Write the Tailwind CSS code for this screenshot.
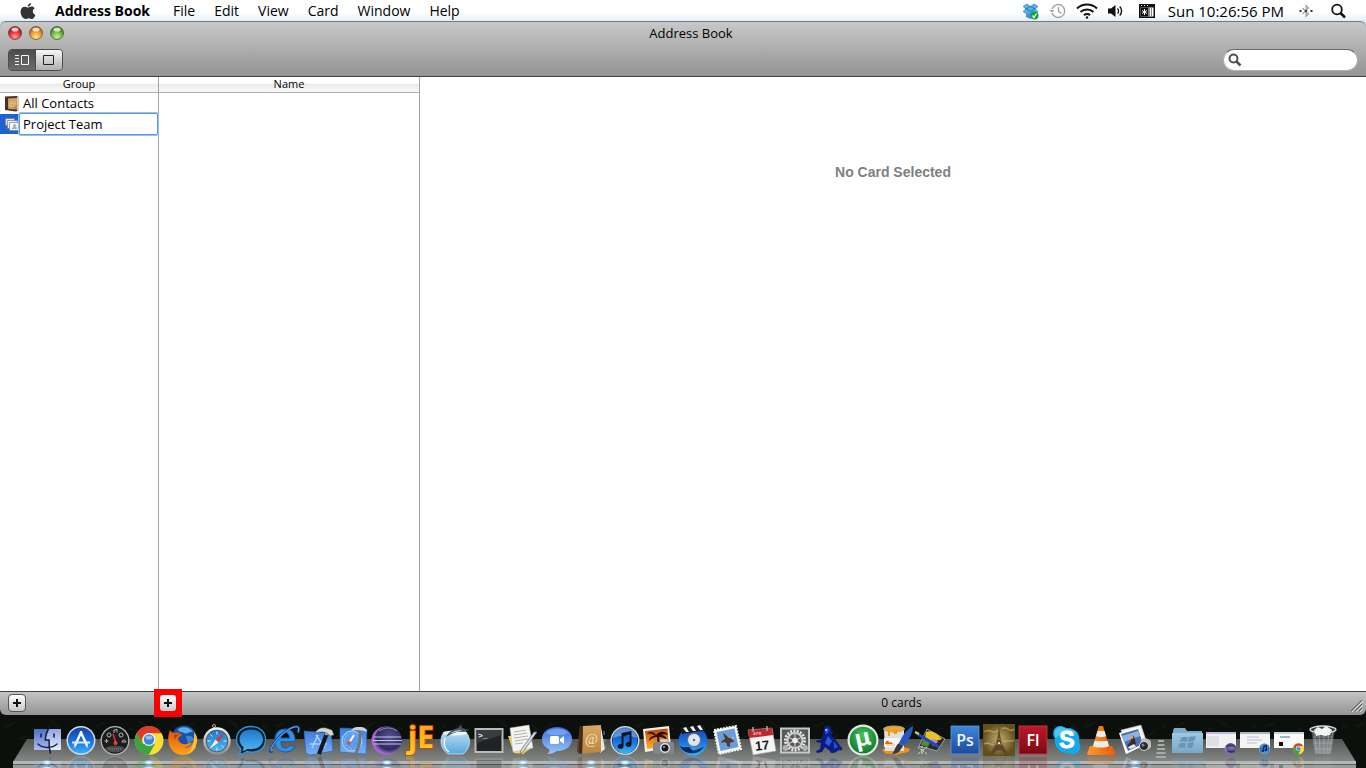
<!DOCTYPE html>
<html lang="en">
<head>
    <meta charset="UTF-8">
    <meta name="viewport" content="width=device-width, initial-scale=1.0">
    <title>Address Book</title>
    <script src="https://cdn.jsdelivr.net/npm/@tailwindcss/browser@4"></script>
</head>
<body class="h-screen flex flex-col overflow-hidden bg-[#0b100c] text-black font-['Open_Sans','Noto_Sans',sans-serif]">

    <!-- Shared gradients; this svg has to stay rendered for the fills to work -->
    <svg class="absolute w-0 h-0" aria-hidden="true">
        <defs>
            <linearGradient id="gFinderL" x2="0" y2="1"><stop offset="0" stop-color="#4f6fc4"/><stop offset="1" stop-color="#a9bdf0"/></linearGradient>
            <linearGradient id="gFinderR" x2="0" y2="1"><stop offset="0" stop-color="#8fa6e2"/><stop offset="1" stop-color="#e4ecfc"/></linearGradient>
            <linearGradient id="gBlue" x2="0" y2="1"><stop offset="0" stop-color="#1540a0"/><stop offset=".5" stop-color="#1a6fe0"/><stop offset="1" stop-color="#35b4fa"/></linearGradient>
            <linearGradient id="gSilver" x2="0" y2="1"><stop offset="0" stop-color="#f4f4f4"/><stop offset="1" stop-color="#8d8d8d"/></linearGradient>
            <linearGradient id="gSky" x2="0" y2="1"><stop offset="0" stop-color="#2176c8"/><stop offset="1" stop-color="#4cb8f6"/></linearGradient>
            <linearGradient id="gPrint" x2="0" y2="1"><stop offset="0" stop-color="#3c7cdc"/><stop offset="1" stop-color="#7ab2f8"/></linearGradient>
            <linearGradient id="gChat" x2="0" y2="1"><stop offset="0" stop-color="#3568d8"/><stop offset="1" stop-color="#9cc8fc"/></linearGradient>
            <linearGradient id="gTan" x2="0" y2="1"><stop offset="0" stop-color="#d8a860"/><stop offset="1" stop-color="#b98440"/></linearGradient>
            <linearGradient id="gPs" x2="0" y2="1"><stop offset="0" stop-color="#3f86dc"/><stop offset="1" stop-color="#1c4a98"/></linearGradient>
            <linearGradient id="gFl" x2="0" y2="1"><stop offset="0" stop-color="#c01828"/><stop offset="1" stop-color="#780914"/></linearGradient>
            <linearGradient id="gSunset" x2="0" y2="1"><stop offset="0" stop-color="#c04408"/><stop offset="1" stop-color="#ffb428"/></linearGradient>
            <linearGradient id="gCone" x2="1" y2="0"><stop offset="0" stop-color="#ff9a28"/><stop offset="1" stop-color="#e85c00"/></linearGradient>
            <linearGradient id="gFolder" x2="0" y2="1"><stop offset="0" stop-color="#9fc8e0"/><stop offset="1" stop-color="#78a8c8"/></linearGradient>
            <linearGradient id="gBowl" x2="0" y2="1"><stop offset="0" stop-color="#b8dcf2"/><stop offset="1" stop-color="#58a8dc"/></linearGradient>
            <linearGradient id="gYellow" x2="0" y2="1"><stop offset="0" stop-color="#ff9a10"/><stop offset="1" stop-color="#ffd21c"/></linearGradient>
            <linearGradient id="gFire" x2="0" y2="1"><stop offset="0" stop-color="#e05008"/><stop offset="1" stop-color="#fca41c"/></linearGradient>
            <radialGradient id="gEclipse" cx=".55" cy=".4" r=".6"><stop offset="0" stop-color="#5c5690"/><stop offset=".75" stop-color="#2e2a60"/><stop offset="1" stop-color="#8a68b8"/></radialGradient>
            <radialGradient id="gGreen" cx=".5" cy=".35" r=".7"><stop offset="0" stop-color="#48c060"/><stop offset="1" stop-color="#087828"/></radialGradient>
            <radialGradient id="gParis"><stop offset="0" stop-color="#c8b070"/><stop offset="1" stop-color="#62501c"/></radialGradient>
            <radialGradient id="gGlow"><stop offset="0" stop-color="#fff"/><stop offset=".4" stop-color="#c0e6ff"/><stop offset="1" stop-color="#68b0f0" stop-opacity="0"/></radialGradient>
            <radialGradient id="gRed" cx=".5" cy=".8" r=".75"><stop offset="0" stop-color="#ff9c94"/><stop offset=".55" stop-color="#e8303c"/><stop offset="1" stop-color="#8c1018"/></radialGradient>
            <radialGradient id="gAmber" cx=".5" cy=".8" r=".75"><stop offset="0" stop-color="#ffe888"/><stop offset=".55" stop-color="#f09a30"/><stop offset="1" stop-color="#98500c"/></radialGradient>
            <radialGradient id="gLime" cx=".5" cy=".8" r=".75"><stop offset="0" stop-color="#c8f490"/><stop offset=".55" stop-color="#6cb840"/><stop offset="1" stop-color="#2c6c18"/></radialGradient>
        </defs>
    </svg>

    <!-- Icon shapes, each drawn on a 34x32 tile -->
    <svg class="hidden" aria-hidden="true">
        <symbol id="finder" viewBox="0 0 34 32">
            <path d="M4 5h14.500c-2 4-3 7-3.200 11h3.500l.5 10H4z" fill="url(#gFinderL)"/>
            <path d="M18.500 5H31v21H19l-.5-10h-3c.2-4 1-7 3-11z" fill="url(#gFinderR)"/>
            <path d="M20 2c-3 5-4.500 9-4.700 14h3.700c0 4 .3 9 1.300 13M8 20c5 4.500 14 4.500 19 0M11 10v3M24 10v3" fill="none" stroke="#151b38" stroke-width="1.500" stroke-linecap="round"/>
        </symbol>
        <symbol id="appstore" viewBox="0 0 34 32">
            <circle cx="17" cy="16.500" r="14.500" fill="#d4dae2"/><circle cx="17" cy="16.500" r="13" fill="url(#gBlue)"/>
            <path d="M17.500 7.500 11 21.500M16.500 7.500 23 21.500" stroke="#f4faff" stroke-width="2.500"/><path d="M8 18.500h18" stroke="#dcecff" stroke-width="2"/>
            <path d="M10.800 21l-.8 3 2.500-2.200zM23.200 21l.8 3-2.500-2.200z" fill="#fff"/>
        </symbol>
        <symbol id="dashboard" viewBox="0 0 34 32">
            <circle cx="17" cy="16.500" r="14.500" fill="#b8b8b8"/><circle cx="17" cy="16.500" r="13.200" fill="#1c1c1e"/>
            <g fill="none" stroke="#b4b4b4"><circle cx="11" cy="11" r="2"/><circle cx="23" cy="11" r="2"/><path d="M6.500 17h4M8.500 15v4M24 18c0-2.500 4-2.500 4 0zM16 9V6l3-.5v3"/></g>
            <path d="M7 24c5-3 15-3 20 0-5 6-15 6-20 0z" fill="#4c4c50"/><path d="M10 25h14" stroke="#888" stroke-dasharray="1 1"/>
            <path d="M15 10l3 9" stroke="#e83030" stroke-width="1.500"/><circle cx="17.500" cy="19" r="2" fill="#f04038"/>
        </symbol>
        <symbol id="chrome" viewBox="0 0 34 32">
            <circle cx="17" cy="16.500" r="14.300" fill="#e8c820"/>
            <path d="M4.600 9.300A14.300 14.300 0 0 0 17 30.800L23 20 11 20z" fill="#3ca440"/>
            <path d="M29.400 9.300A14.300 14.300 0 0 1 17 30.800L23 20 20 9.300z" fill="#fadc38"/>
            <path d="M4.600 9.300A14.300 14.300 0 0 1 29.400 9.300H17a7 7 0 0 0-6.500 10z" fill="#dc3c30"/>
            <circle cx="17" cy="15.500" r="6.500" fill="#f4f4f0"/><circle cx="17" cy="15.500" r="5.200" fill="#3c84d8"/><ellipse cx="17" cy="13.500" rx="3.500" ry="2" fill="#8cc0f4"/>
        </symbol>
        <symbol id="firefox" viewBox="0 0 34 32">
            <circle cx="18" cy="14" r="12.500" fill="#1c50a8"/><path d="M12 5c5-3 12-2 15 3-4-1-5 3-9 1s-5 0-6-4z" fill="#58b0e8"/><path d="M20 12c4-1 7 0 8 4l-6 4z" fill="#3888d0"/>
            <path d="M4 6c1 2 3 3 5 3 3-1 5 0 7 2-1 1-4 2-4 4 1 3 3 5 6 5 3 1 5-2 8-1-2 4-6 4-8 4 6 2 10-3 10-12 5 9 1 20-11 20C5 31-1 18 4 6z" fill="url(#gFire)"/>
            <path d="M28 8c4 5 4 9 2 13 0 4-5 8-9 9 6-6 8-14 7-22z" fill="#fcc030"/>
            <path d="M8 11c2-1 4 0 5 1-3 0-4 2-3 4-2-1-2-3-2-5z" fill="#b83c08"/>
        </symbol>
        <symbol id="safari" viewBox="0 0 34 32">
            <circle cx="14" cy="2" r="1.500" fill="none" stroke="#aaa"/><circle cx="17" cy="17" r="13.700" fill="url(#gSilver)"/><circle cx="17" cy="17" r="11.300" fill="#4a545c"/><circle cx="17" cy="17" r="10.500" fill="url(#gSky)"/>
            <path d="M17 7.500v3M17 23.500v3M7.500 17h3M23.500 17h3M10.500 10.500l2 2M21.500 21.500l2 2" stroke="#e0f0fc"/>
            <path d="M24.500 9 18.500 18.500 15.500 15.500z" fill="#e03828"/><path d="M9.500 25 15.500 15.500 18.500 18.500z" fill="#f4f8fc"/>
        </symbol>
        <symbol id="bubble" viewBox="0 0 34 32">
            <path d="M17 2.500C8 2.500 2.500 8 2.500 15.500c0 4 2 7 4.500 9.500 0 2-1 4-2 5 4 0 6-1.500 7.500-2.500C25 30 31.500 24 31.500 15.500 31.500 8 26 2.500 17 2.500z" fill="#0c1c2c" stroke="#2898e4" stroke-width="1.300"/>
            <path d="M17 5.500C10 5.500 5.500 9.500 5.500 15.500c0 3.500 1.700 5.500 4 7.500 0 1.500 0 2.500-1 4 2-.2 3.500-1 5-2.200C22 26.500 29 22 29 15.500c0-6-5-10-12-10z" fill="url(#gSky)"/>
        </symbol>
        <symbol id="explorer" viewBox="0 0 34 32">
            <text x="17" y="28" text-anchor="middle" font-family="Liberation Sans" font-size="42" font-weight="bold" fill="#3490e0" stroke="#1858a8" stroke-width=".8">e</text>
            <path d="M5 27C-3 31 8 13 21 5c9-5 12-2 9 4" fill="none" stroke="#123c80" stroke-width="2.500"/>
            <path d="M5 26.500C-2 29 9 13 21 5.300c8-4.800 11-3 9 3" fill="none" stroke="#4ca4ec" stroke-width="1.300"/>
        </symbol>
        <symbol id="xcode" viewBox="0 0 34 32">
            <path d="M2 7l27 2 2 18-23 4-4-2z" fill="url(#gPrint)" stroke="#2c64b8" stroke-width=".6"/>
            <path d="M16 11l-6 13M14 11l9 13M8 20h17" stroke="#a8d0fc" stroke-width="1.500"/>
            <path d="M25 9 17 30" stroke="#15171a" stroke-width="4"/><path d="M26 5l-2 6" stroke="#b0b4b8" stroke-width="3"/><path d="M13 9c2-4 6-6 11-5l6 2 2 5-4 1-3-3-4-1c-3 0-5 0-8 1z" fill="#d4d8dc" stroke="#444" stroke-width=".5"/>
        </symbol>
        <symbol id="dashcode" viewBox="0 0 34 32">
            <path d="M4 4l27 1-1 25-26-2z" fill="url(#gPrint)" stroke="#2c64b8" stroke-width=".6"/>
            <circle cx="16" cy="17" r="10" fill="#5a9cf0" stroke="#b4d8fc"/><circle cx="16" cy="17" r="7.500" fill="none" stroke="#b4d8fc" stroke-dasharray="1 2"/><path d="M18 11l-5 8" stroke="#f4f8fc" stroke-width="2"/><circle cx="13" cy="19" r="2" fill="#dc5040"/>
            <path d="M24 5c0 9 1 15-5 26" fill="none" stroke="#70767e" stroke-width="3"/><path d="M15 7c2-4 5-4 9-4 4 0 6 1 7 5-5-2-11-3-16-1z" fill="#d0d4d8"/>
        </symbol>
        <symbol id="eclipse" viewBox="0 0 34 32">
            <ellipse cx="16" cy="16.500" rx="14.500" ry="14" fill="#b060d8"/><ellipse cx="18" cy="16" rx="14" ry="13.500" fill="url(#gEclipse)"/>
            <path d="M4 13h27M3 16.500h29M4 20h27" stroke="#c8c4e4" stroke-width="1.100"/><path d="M9 7c5-4 13-4 18 0" stroke="#8c88b8" fill="none"/>
        </symbol>
        <symbol id="jedit" viewBox="0 0 34 32">
            <text x="17" y="24" text-anchor="middle" font-family="Open Sans" font-size="30" font-weight="bold" fill="url(#gYellow)" stroke="#d83c08" stroke-width="1.500" paint-order="stroke">jE</text>
        </symbol>
        <symbol id="fishbowl" viewBox="0 0 34 32">
            <path d="M6 8h22c6 7 4 17-3 22H10C2 25 1 14 6 8z" fill="url(#gBowl)" stroke="#dceefa" stroke-width=".7"/><ellipse cx="17" cy="9" rx="12" ry="2.500" fill="#e8f4fc"/>
            <path d="M8 13c3-6 8-8 12-9l3-3 1 3 7 2-6 2c-6-1-10 1-17 5z" fill="#485460"/><path d="M12 10c3-3 7-4 12-4-4 2-8 2-12 4z" fill="#c8d4dc"/><path d="M7 14c-2 6 0 11 4 14" stroke="#e8f6ff" stroke-width="1.500" fill="none"/>
        </symbol>
        <symbol id="terminal" viewBox="0 0 34 32">
            <rect x="2.500" y="4" width="29" height="25" fill="#b8bcbc"/><rect x="4.500" y="6" width="25" height="21" fill="#202224"/><path d="M4.500 6h25v5l-25 8z" fill="#3a3d40"/>
            <text x="6" y="14" font-family="Liberation Mono" font-size="8" font-weight="bold" fill="#eee">&gt;_</text>
        </symbol>
        <symbol id="textedit" viewBox="0 0 34 32">
            <path d="M2 12l6 17 9 1 7-5-4-14z" fill="#ead848"/><path d="M4 4l19-3 4 23-20 4z" fill="#f4f4f2" stroke="#b8b8b8" stroke-width=".5"/>
            <path d="M8 8l12-2M8 11l13-2M8 14l14-2M9 17l13-2M9 20l8-1" stroke="#a0a0a0" stroke-width=".8"/><path d="M31 8 17 28l-3 2 1-4L28 8z" fill="#d8dce0" stroke="#606468" stroke-width=".7"/>
        </symbol>
        <symbol id="ichat" viewBox="0 0 34 32">
            <path d="M17 3c9 0 15 5 15 12S26 27 17 27c-3 2-6 3-10 3 2-1 3-3 2-5-5-2-7-6-7-10C2 8 8 3 17 3z" fill="url(#gChat)"/>
            <path d="M6 9c4-6 18-6 22 0-6 3-16 3-22 0z" fill="#84b0f4" opacity=".7"/><rect x="10" y="12" width="9" height="8" rx="1.500" fill="#fff"/><path d="M20 15l4-3v8l-4-3z" fill="#fff"/>
        </symbol>
        <symbol id="contacts" viewBox="0 0 34 32">
            <path d="M27 3l4 22-5 4z" fill="#ece8dc"/><path d="M6 2h7v26l-8 2-2-3z" fill="#5a3c26"/><path d="M9 2l18-1v27L8 30z" fill="url(#gTan)"/><path d="M6 2l3 0-1 28-3-2z" fill="#442a1c"/><path d="M30 7v4M31 15v3M31 21v3" stroke="#58a8c0"/>
            <text x="17.500" y="20" text-anchor="middle" font-family="Liberation Serif" font-size="14" fill="#f4e4c0">@</text>
        </symbol>
        <symbol id="itunes" viewBox="0 0 34 32">
            <circle cx="17" cy="16.500" r="14.500" fill="#ccd4dc"/><circle cx="17" cy="16.500" r="13" fill="#0c2850"/><circle cx="17" cy="17" r="12.300" fill="url(#gBlue)"/><path d="M5 14a12 11 0 0 1 24 0c-8-3-16-3-24 0z" fill="#8cc8f8" opacity=".55"/>
            <path d="M13.500 9l10-2v13a3 2.500 0 1 1-2-2v-7l-6 1.200V22a3 2.500 0 1 1-2-2z" fill="#081428"/>
        </symbol>
        <symbol id="iphoto" viewBox="0 0 34 32">
            <path d="M1 5l26-3 2 22-26 4z" fill="#f6f2ea"/><path d="M3 7l22.500-2.500 1.500 18L5 25z" fill="url(#gSunset)"/>
            <path d="M14 11c-3-4-7-4-9-1 3-1 6 0 8 2-4 0-6 2-6 5 3-3 5-4 8-4l1 10h2l-1-10c4 0 6 1 8 4 0-4-3-6-6-6 2-1 4-1 7 0-2-4-8-4-11-1z" fill="#2c1004"/>
            <rect x="11" y="18" width="21" height="12" rx="1.500" fill="#82868c"/><path d="M18 18l1-3h6l1 3z" fill="#c8ccd0"/><circle cx="23" cy="24" r="5" fill="#dce0e4"/><circle cx="23" cy="24" r="3.500" fill="#16181c"/><circle cx="22" cy="23" r="1" fill="#90a8c0"/>
        </symbol>
        <symbol id="dvd" viewBox="0 0 34 32">
            <circle cx="17" cy="17" r="14.500" fill="url(#gBlue)"/><path d="M4 22c6 3 8-1 11 3s8-1 13-2l-4 4c-6 4-17 3-20-5z" fill="#0b2860"/><circle cx="18" cy="16" r="6.500" fill="#dfe4e8" stroke="#68727c"/><circle cx="18" cy="16" r="2" fill="#68727c" stroke="#fff"/>
            <path d="M4 4l23-3 3 5L6 10z" fill="#18191c"/><path d="M7 4l3 4h3l-3-5zM14 3l3 4h3l-3-5zM21 2l3 4h3l-3-5z" fill="#f0f0f0"/>
        </symbol>
        <symbol id="mail" viewBox="0 0 34 32">
            <path d="M4 6l22-4 5 23-22 5z" fill="#f4f6f8" stroke="#f4f6f8" stroke-width="2" stroke-dasharray="2 1"/><path d="M6.500 8l18-3.500 4 18.500-18 4z" fill="#6c9cdc"/>
            <path d="M13 9c3 2 4 3 6 5 3 0 4 1 5 4-2 0-3 0-4 1v4l-3-1c0-3-1-4-3-4l-3 1c0-2 2-3 4-4z" fill="#4c3c2c"/><path d="M21 14l3-1-1 2z" fill="#e8dcc0"/>
        </symbol>
        <symbol id="calendar" viewBox="0 0 34 32">
            <path d="M4 6l24-2 4 23-23 4z" fill="#f5f5f5" stroke="#a8a8a8" stroke-width=".6"/><path d="M4 6l24-2 1 7-24 3z" fill="#bc2830"/><path d="M9 3v5M23 2v5" stroke="#aaa" stroke-width="1.500"/>
            <text x="9" y="11" font-family="Liberation Sans" font-size="4" font-weight="bold" fill="#f0b0b0">APR</text>
            <text x="18" y="26" text-anchor="middle" font-family="Liberation Sans" font-size="13" font-weight="bold" fill="#151515" transform="rotate(-6 18 20)">17</text>
        </symbol>
        <symbol id="preferences" viewBox="0 0 34 32">
            <rect x="2" y="3.500" width="30" height="26" fill="#c4c8c8"/><rect x="4" y="5.500" width="26" height="22" fill="#57595b"/>
            <circle cx="17" cy="16.500" r="9.500" fill="none" stroke="#e4e4e4" stroke-width="3" stroke-dasharray="2 1.300"/><circle cx="17" cy="16.500" r="7.500" fill="none" stroke="#d0d0d0" stroke-width="2"/><path d="M17 9v15M10 13l14 7M10 20l14-7" stroke="#c4c4c4" stroke-width="1.200"/><circle cx="17" cy="16.500" r="2.800" fill="#eee"/><circle cx="7.500" cy="24" r="3" fill="#b0b0b0"/><circle cx="27" cy="24" r="3" fill="#b0b0b0"/>
        </symbol>
        <symbol id="frog" viewBox="0 0 34 32">
            <path d="M12 3c3-3 8-1 7 3 3 1 2 3 0 5 5 4 8 9 10 12 2 2 2 4-2 3l-3 2c-3 2-6 1-6-1l-5-4-3 5-5 1-1-2 4-2 1-6-5-1c0-2 3-2 5-2 1-5 3-7 3-13z" fill="#0a1e80"/>
            <path d="M14 4l3 1-1 4-3 1zM16 12l4 5-3 5-4-3z" fill="#2c58e8"/><path d="M22 17l4 6-4 2z" fill="#2450d8"/><circle cx="14" cy="6" r="1" fill="#b0d0ff"/>
        </symbol>
        <symbol id="utorrent" viewBox="0 0 34 32">
            <circle cx="17" cy="16" r="15.500" fill="#e2e8e2"/><circle cx="17" cy="16" r="13.300" fill="url(#gGreen)"/>
            <text x="17" y="22" text-anchor="middle" font-family="Inter" font-size="24" font-weight="bold" fill="#fff" transform="rotate(-12 17 16)">µ</text>
        </symbol>
        <symbol id="paint" viewBox="0 0 34 32">
            <path d="M2 26c4-4 20-5 28-1-1 5-6 3-10 5-6 2-9-1-14 0z" fill="#e89414"/><path d="M4 5h20v22H5z" fill="#e0e0e2"/><path d="M4 14h19v9H4z" fill="#f4f4f4"/><ellipse cx="14" cy="5" rx="10.500" ry="3" fill="#f4a41c" stroke="#a8a8a8"/><path d="M6 6h4v6H8V8zM13 6h4v4h-3z" fill="#f09a14"/>
            <path d="M5 20c1-4 3-4 4-2s2-2 4 2z" fill="#e4641c"/><path d="M6 21h9" stroke="#f0b840"/>
            <path d="M33 2c-6 3-11 10-14 17l4 3c6-6 10-13 10-20z" fill="#2458c8"/><path d="M19 19l4 3c-3 5-5 8-11 8 3-3 3-8 7-11z" fill="#303644"/>
        </symbol>
        <symbol id="sketch" viewBox="0 0 34 32">
            <path d="M13 5l18 10-8 12-18-5z" fill="#2a2a2c" stroke="#b8b8b8" stroke-width=".8"/><path d="M12 8c5-2 8 0 11 2l5 5c-6 3-12 2-17-1z" fill="#e8c028"/><path d="M16 16c4-2 7 0 8 2l-5 4z" fill="#c088c0"/><path d="M9 15l7 3-2 5-7-2z" fill="#508c38"/>
            <path d="M2 9l23 14" stroke="#1c48c0" stroke-width="3"/><path d="M1 8l4 2" stroke="#e8d040" stroke-width="2"/><path d="M4 23l9 7M13 23l-9 7M8 22v9" stroke="#e8e8e8" stroke-width="1" stroke-dasharray="2 1"/>
        </symbol>
        <symbol id="photoshop" viewBox="0 0 34 32">
            <rect x="3" y="2" width="28" height="28" fill="url(#gPs)" stroke="#5c9ce4" stroke-width=".8"/>
            <text x="17" y="22" text-anchor="middle" font-family="Open Sans" font-size="16" font-weight="600" fill="#f0f6ff">Ps</text>
        </symbol>
        <symbol id="paris" viewBox="0 0 34 32">
            <rect x="1" y="0" width="32" height="32" fill="url(#gParis)"/><path d="M2 8c6-5 10 4 14-2M20 5c5-4 8 5 12 0M2 20c5-3 7 2 10 0M22 18c3-3 7 1 10-2" stroke="#e0cc90" stroke-width="1.500" fill="none" opacity=".5"/>
            <path d="M17 2l1 9 2 9 6 10h-4c-1-5-9-5-10 0H8l6-10 2-9z" fill="#5c4828"/><path d="M12 20h10M14 15h6" stroke="#8c7444" stroke-width="1.500"/><circle cx="17" cy="19" r="1" fill="#fff8e0"/>
        </symbol>
        <symbol id="flash" viewBox="0 0 34 32">
            <rect x="3" y="2" width="28" height="28" fill="url(#gFl)" stroke="#cc3c48" stroke-width=".8"/>
            <text x="17" y="22" text-anchor="middle" font-family="Open Sans" font-size="16" font-weight="600" fill="#fff">Fl</text>
        </symbol>
        <symbol id="skype" viewBox="0 0 34 32">
            <path d="M10 2c3 0 5 1 6 2 9-1 15 6 13 14 3 5 1 11-5 12-2 0-4 0-5-1C10 30 4 23 5 15 1 9 4 2 10 2z" fill="#14a8ec"/><path d="M10 3c3 0 5 1 6 2 5 0 9 2 11 5C19 7 11 9 6 14 3 9 5 4 10 3z" fill="#78d4f8" opacity=".6"/>
            <text x="17" y="24" text-anchor="middle" font-family="Liberation Sans" font-size="23" font-weight="bold" fill="#fff" stroke="#fff" stroke-width="1">S</text>
        </symbol>
        <symbol id="vlc" viewBox="0 0 34 32">
            <path d="M6 22h22l4 8-1 1H4l-1-1z" fill="url(#gCone)"/><path d="M15 2h4l7 23c-3 3-15 3-18 0z" fill="url(#gCone)"/><path d="M13.500 7h7l1.500 5c-2 1.500-8 1.500-10 0zM10.500 17h13l1.500 5c-3 2-13 2-16 0z" fill="#ececec"/>
        </symbol>
        <symbol id="preview" viewBox="0 0 34 32">
            <path d="M3 6l20-5 6 18-20 9z" fill="#eee" stroke="#aaa" stroke-width=".5"/><path d="M1 9l20-6 6 18-19 9z" fill="#fff"/><path d="M3 10l17-5 5 15-15 7z" fill="#4c70b0"/><path d="M4 12l16-5 2 5-16 6z" fill="#8cb4e4"/><path d="M13 11l3 1 2 8-6 4-3-2 4-5z" fill="#3c2c28"/><circle cx="13.500" cy="13" r="2" fill="#d8a080"/><path d="M10 23l6-3 2 3-6 2z" fill="#e8e8e8"/>
            <path d="M23 15c4-2 9 0 10 3v5c-2 4-10 4-11 1z" fill="#b8bcc0"/><circle cx="26" cy="22" r="4.500" fill="#282a2c" stroke="#d8d8d8"/><circle cx="25" cy="21" r="1.500" fill="#84888c"/>
        </symbol>
        <symbol id="folder" viewBox="0 0 34 32">
            <path d="M3 7l1-3h11l2 3h15v22H3z" fill="#7cacc8"/><path d="M2 9h31v20H2z" fill="url(#gFolder)"/><path d="M11 14c3-2 5 0 7-1l-1 5c-3 0-4-1-7 0zM19 13c3-1 4 0 7-1l-2 5c-2 1-4 0-6 1zM9 20c3-2 5 0 7-1l-1 5c-3 0-4-1-7 0zM18 19c2-1 4 0 6-1l-2 6c-2 0-3-1-5 0z" fill="#6896b4"/>
        </symbol>
        <symbol id="winEclipse" viewBox="0 0 34 32">
            <rect x="2" y="8" width="30" height="16" fill="#f0f0f2"/><path d="M2 8h30v2H2z" fill="#c0b8d8"/><path d="M3 12h12v10H3z" fill="#e0e0e4"/><use href="#eclipse" x="20" y="18" width="13" height="13"/>
        </symbol>
        <symbol id="winItunes" viewBox="0 0 34 32">
            <rect x="2" y="8" width="30" height="16" fill="#f4f4f4"/><path d="M2 8h30v2H2z" fill="#a8b4c0"/><path d="M9 13h12M9 16h15M9 19h10" stroke="#b8c0cc"/><use href="#itunes" x="20" y="18" width="13" height="13"/>
        </symbol>
        <symbol id="winChrome" viewBox="0 0 34 32">
            <rect x="2" y="8" width="30" height="16" fill="#fafafa"/><path d="M2 8h30v2H2z" fill="#c4d0e4"/><path d="M8 13h10" stroke="#4c68b0"/><path d="M7 18h4v4H7z" fill="#111"/><use href="#chrome" x="20" y="18" width="13" height="13"/>
        </symbol>
        <symbol id="trash" viewBox="0 0 34 32">
            <path d="M5 5h24l-4 25H9z" fill="#c0c4c8" opacity=".35"/><path d="M8 7l3 22M13 8l1 22M18 8v22M23 8l-2 22M27 7l-4 22M7 13h20M7 19h19M8 25h17" stroke="#b4b8bc" stroke-width=".5"/><ellipse cx="17" cy="5.500" rx="13" ry="3.500" fill="#3c4040" stroke="#dcdcdc" stroke-width="1.300"/>
            <path d="M8 6l4-3 4 2 4-3 6 4-2 5-5 1-4-1-5 1z" fill="#f4f4f4"/>
        </symbol>
    </svg>

    <!-- Menu bar -->
    <header class="h-[21px] shrink-0 flex items-center justify-between bg-linear-to-b from-white from-60% to-[#e4eefa] text-sm leading-5">
        <nav class="flex items-center gap-[19px] pl-5">
            <a href="#" aria-label="Apple menu">
                <svg class="w-4 h-[18px]" viewBox="0 0 16 18"><path d="M11 1c.1 2-1.500 3.600-3.300 3.500C7.600 2.700 9.200 1.200 11 1zM8.200 5.500c.8 0 1.800-.9 3.300-.9 1.300 0 2.500.6 3.200 1.700-2.800 1.700-2.300 5.500.7 6.600-.7 1.800-2.100 4.100-3.500 4.100-1.200 0-1.600-.8-3.200-.8-1.500 0-2 .8-3.200.8C3 17 .6 13 .6 9.700c0-3.300 2.100-5 4.100-5 1.500 0 2.600.8 3.500.8z" fill="#333"/></svg>
            </a>
            <a href="#" class="font-bold mr-1">Address Book</a>
            <a href="#">File</a>
            <a href="#">Edit</a>
            <a href="#">View</a>
            <a href="#">Card</a>
            <a href="#">Window</a>
            <a href="#">Help</a>
        </nav>
        <div class="flex items-center gap-[10px] pr-[18px]">
            <button aria-label="Dropbox">
                <svg class="w-[17px] h-[18px]" viewBox="0 0 17 18"><path d="M5 2 1 4.500 4 7l4.500-2.500zM12 2 8.500 4.500 13 7l3-2.500zM4 7 1 9.500 5 12l3.500-2.500zM13 7l3 2.500-4 2.500-3.500-2.500zM8.500 4.500 4 7l4.500 2.500L13 7z" fill="#58b4ec" stroke="#1c70b8" stroke-width=".6"/><path d="M4 12.500 8.500 10l4 2.500V15l-4 2L4 15z" fill="#3c94d8"/><circle cx="12.500" cy="13.500" r="4" fill="#18a038"/><path d="m10.500 13.500 1.500 2 2.500-4" stroke="#fff" stroke-width="1.300" fill="none"/></svg>
            </button>
            <button aria-label="Time Machine">
                <svg class="w-[17px] h-4" viewBox="0 0 17 16" fill="none" stroke="#a0a0a0" stroke-width="1.400"><path d="M3 10A6.500 6.500 0 1 0 3 6"/><path d="M9.500 4v4.500l3 2"/><path d="m0 7 3 2.500L5.500 7z" fill="#a0a0a0" stroke="none"/></svg>
            </button>
            <button aria-label="Wi-Fi">
                <svg class="w-[22px] h-4" viewBox="0 0 22 16" fill="none" stroke="#111" stroke-width="2"><path d="M1 5.500c5.500-5.300 14.500-5.300 20 0M4.500 9c3.500-3.500 9.500-3.500 13 0M8 12.200c1.500-1.500 4.500-1.500 6 0"/><circle cx="11" cy="14.500" r="1.200" fill="#111" stroke="none"/></svg>
            </button>
            <button aria-label="Volume">
                <svg class="w-5 h-4" viewBox="0 0 20 16"><path d="M0 5.500h3L7.500 2v12L3 10.500H0z" fill="#111"/><path d="M9.500 5.500c1.300 1.300 1.300 3.700 0 5M11.700 3.500c2.500 2.500 2.500 6.500 0 9" stroke="#111" stroke-width="1.400" fill="none"/></svg>
            </button>
            <button aria-label="Character viewer">
                <svg class="w-[18px] h-4" viewBox="0 0 18 16"><path d="M1 1h16v14H1z" fill="#111"/><path d="M3 2.500h1M6 2.500h1M9 2.500h1" stroke="#fff"/><path d="M2.500 4.500h13v9h-13z" fill="#fff"/><path d="M2.500 4.500h8v9h-8z" fill="#111"/><path d="M6.500 6v6M4 7.500l5 3M4 10.500l5-3" stroke="#fff"/><path d="M11 6h1M13 6h1M11 8h1M13 8h1M11 10h1M13 10h1M11 12h1M13 12h1" stroke="#111"/></svg>
            </button>
            <time class="text-[15px] pl-0.5">Sun 10:26:56 PM</time>
            <button aria-label="Bluetooth">
                <svg class="w-6 h-4" viewBox="0 0 24 16"><path d="m8.500 5 6 6L12 13.500v-11L14.500 5l-6 6" fill="none" stroke="#999" stroke-width="1.100"/><path d="M5.500 7h2v2h-2zM11 7h2v2h-2zM16.500 7h2v2h-2z" fill="#333"/></svg>
            </button>
            <button aria-label="Spotlight">
                <svg class="w-5 h-4" viewBox="0 0 20 16" fill="none" stroke="#111"><circle cx="9" cy="6.500" r="4.800" stroke-width="1.800"/><path d="m12.500 10 4.500 4.500" stroke-width="2.500"/></svg>
            </button>
        </div>
    </header>

    <!-- Window -->
    <main class="flex-1 min-h-0 flex flex-col">
        <div class="bg-[#d8e4ec]">
            <div class="h-14 flex flex-col rounded-t-md border-t border-t-[#6c7a84] border-b border-b-[#404040] bg-linear-to-b from-[#c8c8c8] to-[#949494]">
                <div class="grid grid-cols-[1fr_auto_1fr] items-center h-[22px] px-2">
                    <div class="flex gap-[7px]">
                        <button aria-label="Close"><svg class="w-3.5 h-3.5" viewBox="0 0 14 14"><circle cx="7" cy="7" r="6.500" fill="url(#gRed)" stroke="#6c2c2c" stroke-width=".7"/><ellipse cx="7" cy="3.500" rx="3.500" ry="2" fill="#fff" opacity=".75"/></svg></button>
                        <button aria-label="Minimize"><svg class="w-3.5 h-3.5" viewBox="0 0 14 14"><circle cx="7" cy="7" r="6.500" fill="url(#gAmber)" stroke="#74481c" stroke-width=".7"/><ellipse cx="7" cy="3.500" rx="3.500" ry="2" fill="#fff" opacity=".75"/></svg></button>
                        <button aria-label="Zoom"><svg class="w-3.5 h-3.5" viewBox="0 0 14 14"><circle cx="7" cy="7" r="6.500" fill="url(#gLime)" stroke="#345c24" stroke-width=".7"/><ellipse cx="7" cy="3.500" rx="3.500" ry="2" fill="#fff" opacity=".75"/></svg></button>
                    </div>
                    <h1 class="text-[13px] leading-5 pl-4">Address Book</h1>
                </div>
                <div class="flex items-center justify-between px-2 pt-[5px]">
                    <div class="flex h-[22px] rounded border border-[#4c4c4c] overflow-hidden">
                        <button aria-label="View card and columns" class="w-[27px] flex items-center justify-center bg-linear-to-b from-[#4c4c4c] to-[#6c6c6c] border-r border-[#4c4c4c]">
                            <svg class="w-3.5 h-3" viewBox="0 0 14 12" fill="none" stroke="#f4f4f4"><path d="M0 1.500h4M0 4.500h4M0 7.500h4M0 10.500h4M6.500 1.500h7v9h-7z"/></svg>
                        </button>
                        <button aria-label="View card only" class="w-[26px] flex items-center justify-center bg-linear-to-b from-[#f8f8f8] to-[#b0b0b0]">
                            <svg class="w-3 h-3" viewBox="0 0 12 12" fill="none" stroke="#222"><path d="M.5 1.500h10v9H.5z"/></svg>
                        </button>
                    </div>
                    <label class="flex items-center h-[22px] w-[135px] pl-1 rounded-full bg-white border border-[#b0b0b0] border-t-[#6c6c6c]">
                        <svg class="w-3.5 h-3.5 shrink-0" viewBox="0 0 14 14" fill="none" stroke="#505050" stroke-width="2"><circle cx="5.500" cy="5.500" r="4"/><path d="m8.500 8.500 4 4" stroke-width="2.500"/></svg>
                        <input type="search" aria-label="Search" class="min-w-0 flex-1 px-1 text-xs outline-none">
                    </label>
                </div>
            </div>
        </div>

        <div class="flex-1 min-h-0 flex bg-white">
            <section class="w-[159px] shrink-0 border-r border-[#a4a4a4] text-[13px]">
                <h2 class="h-4 text-center text-[11px] leading-[14px] border-b border-[#b0b0b0] bg-linear-to-b from-white from-40% via-[#ececec] via-50% to-[#f8f8f8]">Group</h2>
                <div class="h-[21px] flex items-center pl-1 gap-[3px]">
                    <svg class="w-4 h-[17px]" viewBox="0 0 16 17"><path d="M1 1.500 13 1l2 1v13l-3 1.500L1 15z" fill="#4a3020"/><path d="M4 3.500 13 3v11.500L4 14z" fill="url(#gTan)"/><path d="m13 1 2 1v13l-2 1z" fill="#d8ccb0"/><text x="8.500" y="11.500" text-anchor="middle" font-family="Liberation Serif" font-size="8" fill="#f8e8c8">@</text></svg>
                    <a href="#">All Contacts</a>
                </div>
                <div class="h-5 flex items-center bg-[#2060d0]">
                    <div class="w-[19px] shrink-0 pl-[5px]">
                        <svg class="w-3.5 h-4" viewBox="0 0 14 16"><path d="M.5 2.500h9v7h-9z" fill="#dce4f0" stroke="#6c7c94" stroke-width=".7"/><path d="M2.500 4.500h10v8h-10z" fill="#eceff4" stroke="#6c7c94" stroke-width=".7"/><path d="M4.500 6.500h12v8h-12z" fill="#fafafa" stroke="#6c7c94" stroke-width=".7"/><path d="M7 13c0-3 5-3 5 0z" fill="#a0aab8"/><circle cx="9.500" cy="9.500" r="1.500" fill="#a0aab8"/></svg>
                    </div>
                    <input type="text" aria-label="Group name" value="Project Team" class="relative min-w-0 flex-1 h-[22px] px-[3px] bg-white border border-[#5c98e0] ring-1 ring-[#98c0f0] rounded-xs outline-none">
                </div>
            </section>
            <section class="w-[261px] shrink-0 border-r border-[#a4a4a4]">
                <h2 class="h-4 text-center text-[11px] leading-[14px] border-b border-[#b0b0b0] bg-linear-to-b from-white from-40% via-[#ececec] via-50% to-[#f8f8f8]">Name</h2>
            </section>
            <section class="flex-1 pt-[85px] text-center">
                <p class="font-['Liberation_Sans',Arial,sans-serif] font-bold text-sm leading-5 text-[#808080]">No Card Selected</p>
            </section>
        </div>

        <footer class="h-6 shrink-0 flex items-center pb-0.5 border-t border-[#404040] rounded-b-md bg-linear-to-b from-[#c4c4c4] to-[#949494]">
            <div class="w-[159px] pl-2">
                <button aria-label="Add group" class="flex w-[18px] h-[18px] items-center justify-center rounded border border-[#555] bg-linear-to-b from-white to-[#c8c8c8]">
                    <svg class="w-2 h-2" viewBox="0 0 8 8" stroke="#111" stroke-width="2"><path d="M4 0v8M0 4h8"/></svg>
                </button>
            </div>
            <div class="relative w-[18px] h-[18px]">
                <button aria-label="Add card" class="flex w-[18px] h-[18px] items-center justify-center rounded border border-[#555] bg-linear-to-b from-white to-[#c8c8c8]">
                    <svg class="w-2 h-2" viewBox="0 0 8 8" stroke="#111" stroke-width="2"><path d="M4 0v8M0 4h8"/></svg>
                </button>
                <span class="absolute -inset-[5px] border-[6px] border-[#ff0000] pointer-events-none"></span>
            </div>
            <p class="flex-1 pl-[278px] text-center text-xs">0 cards</p>
            <svg class="w-4 h-4 self-end mr-0.5" viewBox="0 0 16 16" stroke="#555" fill="none"><path d="M3 14 14 3M7 14l7-7M11 14l3-3"/><path d="M4 15 15 4M8 15l7-7M12 15l3-3" stroke="#ddd"/></svg>
        </footer>
    </main>

    <!-- Dock -->
    <nav aria-label="Dock" class="relative h-[53px] shrink-0 pt-[9px] pl-1 flex justify-center">
        <svg class="absolute inset-0 w-full h-full" viewBox="0 0 1366 53" preserveAspectRatio="none" aria-hidden="true">
            <defs>
                <linearGradient id="gShelf" x2="0" y2="1"><stop offset="0" stop-color="#545654"/><stop offset="1" stop-color="#868886"/></linearGradient>
                <pattern id="leaves" width="90" height="53" patternUnits="userSpaceOnUse"><path d="M5 12l9-4M28 20l-8 5M50 6l8 6M66 22l9-5M82 10l5 4M38 14l5-1" stroke="#10180f" stroke-width="2"/></pattern>
            </defs>
            <path d="M0 0h1366v53H0z" fill="url(#leaves)"/>
            <path d="M27 24h1315l14 23H13z" fill="url(#gShelf)"/>
            <path d="M13 46h1343v3H13z" fill="#b4b6b6"/>
            <path d="M13 49h1343v1H13z" fill="#5c5e5e"/>
            <path d="M13 50h1343v3H13z" fill="#9a9c9c"/>
        </svg>
        <div id="dock" class="relative flex"></div>
    </nav>

    <script>
        // [symbol id, label, running]
        const apps = [
            ['finder', 'Finder', true], ['appstore', 'App Store'], ['dashboard', 'Dashboard'], ['chrome', 'Chrome', true],
            ['firefox', 'Firefox'], ['safari', 'Safari'], ['bubble', 'Messages'], ['explorer', 'Internet Explorer'],
            ['xcode', 'Xcode'], ['dashcode', 'Dashcode'], ['eclipse', 'Eclipse', true], ['jedit', 'jEdit'],
            ['fishbowl', 'Fish Bowl'], ['terminal', 'Terminal'], ['textedit', 'TextEdit', true], ['ichat', 'iChat'],
            ['contacts', 'Address Book', true], ['itunes', 'iTunes', true], ['iphoto', 'iPhoto'], ['dvd', 'iDVD'],
            ['mail', 'Mail'], ['calendar', 'iCal'], ['preferences', 'System Preferences'], ['frog', 'Frog'],
            ['utorrent', 'uTorrent'], ['paint', 'Paint'], ['sketch', 'Sketch'], ['photoshop', 'Photoshop'],
            ['paris', 'Paris'], ['flash', 'Flash'], ['skype', 'Skype'], ['vlc', 'VLC'], ['preview', 'Preview', true],
            null,
            ['folder', 'Windows Folder'], ['winEclipse', 'Eclipse window'], ['winItunes', 'iTunes window'],
            ['winChrome', 'Chrome window'], ['trash', 'Trash']
        ];

        document.getElementById('dock').innerHTML = apps.map(app => {
            if (!app) {
                return `<svg class="w-[18px] h-11" viewBox="0 0 18 44"><path d="M6 17h6M5.500 21h7M5 25h8M4.500 29h9M4 33h10" stroke="#a8aaaa" stroke-width="2"/></svg>`;
            }
            const [id, label, running] = app;
            return `
                <button aria-label="${label}">
                    <svg class="w-[34px] h-11" viewBox="0 0 34 44">
                        <use href="#${id}" width="34" height="32" transform="translate(0 63) scale(1 -1)" opacity=".22"/>
                        <use href="#${id}" width="34" height="32"/>
                        ${running ? '<ellipse cx="17" cy="38.500" rx="7" ry="3" fill="url(#gGlow)"/><ellipse cx="17" cy="44" rx="7" ry="2" fill="url(#gGlow)"/>' : ''}
                    </svg>
                </button>`;
        }).join('');
    </script>
</body>
</html>
